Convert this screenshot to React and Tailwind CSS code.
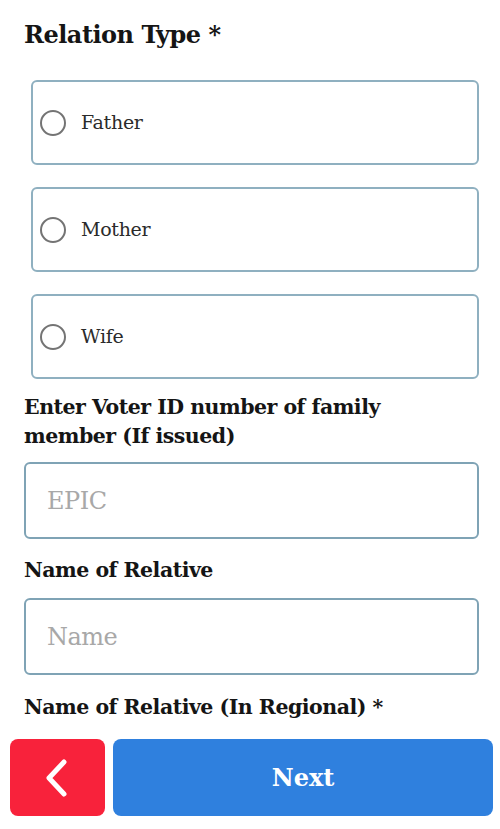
const serif = { fontFamily: '"DejaVu Serif", "Liberation Serif", serif' };

const options = ['Father', 'Mother', 'Wife'];

const RadioOption = ({ label }) => (
    <div className="h-[85px] rounded-md border-2 border-[#8fb0c0] flex items-center pl-[7px]">
        <span className="w-[26px] h-[26px] rounded-full border-[2.5px] border-[#747474]" />
        <span className="ml-[15px] text-[19px] text-[#2b2b2b] tracking-[-0.3px]">{label}</span>
    </div>
);

const TextField = ({ placeholder }) => (
    <div className="h-[77px] rounded-md border-2 border-[#7fa3b5] flex items-center pl-[21px]">
        <span className="text-[24px] text-[#a8a8a8] tracking-[-0.5px]">{placeholder}</span>
    </div>
);

export default function App() {
    return (
        <div className="w-[500px] h-[829px] bg-white overflow-hidden" style={serif}>
            <div className="pl-[24px] pr-[21px]">
                <h1 className="pt-[20px] text-[24px] leading-[30px] font-bold text-[#151515] tracking-[-0.5px]">
                    Relation Type *
                </h1>
                <div className="mt-[30px] ml-[7px] flex flex-col gap-[22px]">
                    {options.map((o) => (
                        <RadioOption key={o} label={o} />
                    ))}
                </div>
                <p className="mt-[14px] max-w-[420px] text-[20.5px] leading-[29px] font-bold text-[#151515] tracking-[-0.5px]">
                    Enter Voter ID number of family member (If issued)
                </p>
                <div className="mt-[11px]">
                    <TextField placeholder="EPIC" />
                </div>
                <p className="mt-[17px] text-[20.5px] leading-[29px] font-bold text-[#151515] tracking-[-0.5px]">
                    Name of Relative
                </p>
                <div className="mt-[13px]">
                    <TextField placeholder="Name" />
                </div>
                <p className="mt-[18px] text-[20.5px] leading-[29px] font-bold text-[#151515] tracking-[-0.5px]">
                    Name of Relative (In Regional) *
                </p>
            </div>
            <div className="mt-[17px] pl-[10px] pr-[7px] flex gap-[8px]">
                <button className="w-[95px] h-[77px] rounded-lg bg-[#f8223b] flex items-center justify-center">
                    <svg width="28" height="40" viewBox="0 0 28 40" fill="none">
                        <path d="M20 4 L5 20 L20 36" stroke="white" strokeWidth="5" strokeLinecap="round" strokeLinejoin="round" />
                    </svg>
                </button>
                <button className="flex-1 h-[77px] rounded-lg bg-[#2f80de] flex items-center justify-center text-white text-[24px] font-bold" style={serif}>
                    Next
                </button>
            </div>
        </div>
    );
}
